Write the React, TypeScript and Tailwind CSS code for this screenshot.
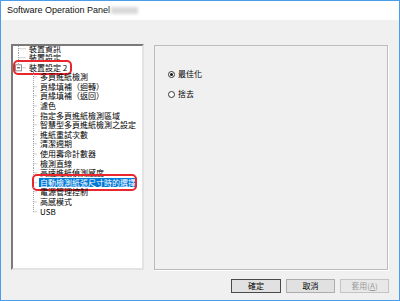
import React from 'react';

type Row = {
  label: string;
  level: 1 | 2;
  last?: boolean;
  expander?: boolean;
  selected?: boolean;
  marked?: boolean;
};

const rows: Row[] = [
  { label: '裝置資訊', level: 1 },
  { label: '裝置設定', level: 1 },
  { label: '裝置設定 2', level: 1, last: true, expander: true, marked: true },
  { label: '多頁進紙檢測', level: 2 },
  { label: '頁緣填補（迴轉）', level: 2 },
  { label: '頁緣填補（返回）', level: 2 },
  { label: '濾色', level: 2 },
  { label: '指定多頁進紙檢測區域', level: 2 },
  { label: '智慧型多頁進紙檢測之設定', level: 2 },
  { label: '進紙重試次數', level: 2 },
  { label: '清潔週期', level: 2 },
  { label: '使用壽命計數器', level: 2 },
  { label: '檢測直線', level: 2 },
  { label: '高速進紙偵測感度', level: 2 },
  { label: '自動檢測紙張尺寸時的選擇', level: 2, selected: true, marked: true },
  { label: '電源管理控制', level: 2 },
  { label: '高感模式', level: 2 },
  { label: 'USB', level: 2, last: true },
];

const ROW_H = 9.6;
const LINE = '#a0a0a0';

function Guides({ row }: { row: Row }) {
  const mid = ROW_H / 2;
  if (row.level === 1) {
    return (
      <svg width={14} height={ROW_H} className="shrink-0">
        <line x1={5.5} y1={0} x2={5.5} y2={row.last ? mid : ROW_H} stroke={LINE} strokeDasharray="1 1" />
        <line x1={5.5} y1={mid} x2={13} y2={mid} stroke={LINE} strokeDasharray="1 1" />
        {row.expander && (
          <g>
            <rect x={2.5} y={mid - 3} width={6} height={6} fill="#fff" stroke="#919191" />
            <line x1={4} y1={mid} x2={7} y2={mid} stroke="#333" />
          </g>
        )}
      </svg>
    );
  }
  return (
    <svg width={25} height={ROW_H} className="shrink-0">
      <line x1={20.5} y1={0} x2={20.5} y2={row.last ? mid : ROW_H} stroke={LINE} strokeDasharray="1 1" />
      <line x1={20.5} y1={mid} x2={24.5} y2={mid} stroke={LINE} strokeDasharray="1 1" />
    </svg>
  );
}

function Radio({ checked, label }: { checked?: boolean; label: string }) {
  return (
    <div className="flex items-center gap-[3px] h-[10px]">
      <span className="w-[7px] h-[7px] rounded-full border border-[#333] bg-white flex items-center justify-center">
        {checked && <span className="w-[3px] h-[3px] rounded-full bg-[#111]" />}
      </span>
      <span className="text-[8px] leading-[10px] text-black">{label}</span>
    </div>
  );
}

export default function App() {
  return (
    <div
      className="w-[400px] h-[301px] border border-[#4a9de8] bg-[#f0f0f0] flex flex-col overflow-hidden"
      style={{ fontFamily: '"Noto Sans CJK TC", "Noto Sans", sans-serif' }}
    >
      <div className="h-[19px] bg-white flex items-center pl-[6px] shrink-0">
        <span className="text-[9px] text-[#111]" style={{ fontFamily: '"Liberation Sans", Arial, sans-serif' }}>
          Software Operation Panel
        </span>
        <span className="ml-[1px] w-[27px] h-[7px] bg-[#d9d9d9] blur-[1.5px]" />
      </div>

      <div className="flex flex-1 min-h-0 mt-[24px] pl-[10px] gap-[10px]">
        <div className="w-[133px] h-full shrink-0 bg-white border-2 border-t-[#7a7a7a] border-l-[#7a7a7a] border-r-[#e3e3e3] border-b-[#e3e3e3] overflow-hidden">
          <div className="-mt-[2.5px]">
            {rows.map((row) => (
              <div key={row.label} className="relative flex items-center" style={{ height: ROW_H }}>
                <Guides row={row} />
                <span
                  className={
                    'ml-[1px] px-[1px] text-[8px] leading-[9.6px] whitespace-nowrap ' +
                    (row.selected ? 'bg-[#0078d7] text-white' : 'text-black')
                  }
                >
                  {row.label}
                </span>
                {row.marked && row.level === 1 && (
                  <span className="absolute left-0 top-[-3px] w-[59px] h-[15px] border-2 border-[#e8262c] rounded-[5px]" />
                )}
                {row.marked && row.level === 2 && (
                  <span className="absolute left-[19px] top-[-4px] w-[105px] h-[17px] border-2 border-[#e8262c] rounded-[5px]" />
                )}
              </div>
            ))}
          </div>
        </div>

        <div className="w-[234px] h-full shrink-0 pt-[1px]">
          <div className="h-full border border-[#bcbcbc] shadow-[1px_1px_0_#ffffff] pl-[13px] pt-[23px] flex flex-col gap-[10px]">
            <Radio checked label="最佳化" />
            <Radio label="捨去" />
          </div>
        </div>
      </div>

      <div className="flex shrink-0 h-[14px] justify-end gap-[5px] pr-[10px] mt-[9px] mb-[7px]">
        <button className="w-[50px] h-[14px] bg-[#e1e1e1] border border-[#4a4a4a] text-[8px] leading-[12px] text-black">
          確定
        </button>
        <button className="w-[49px] h-[14px] bg-[#e1e1e1] border border-[#adadad] text-[8px] leading-[12px] text-black">
          取消
        </button>
        <button className="w-[49px] h-[14px] bg-[#e8e8e8] border border-[#c4c4c4] text-[8px] leading-[12px] text-[#9a9a9a]">
          套用(<span className="underline">A</span>)
        </button>
      </div>
    </div>
  );
}
